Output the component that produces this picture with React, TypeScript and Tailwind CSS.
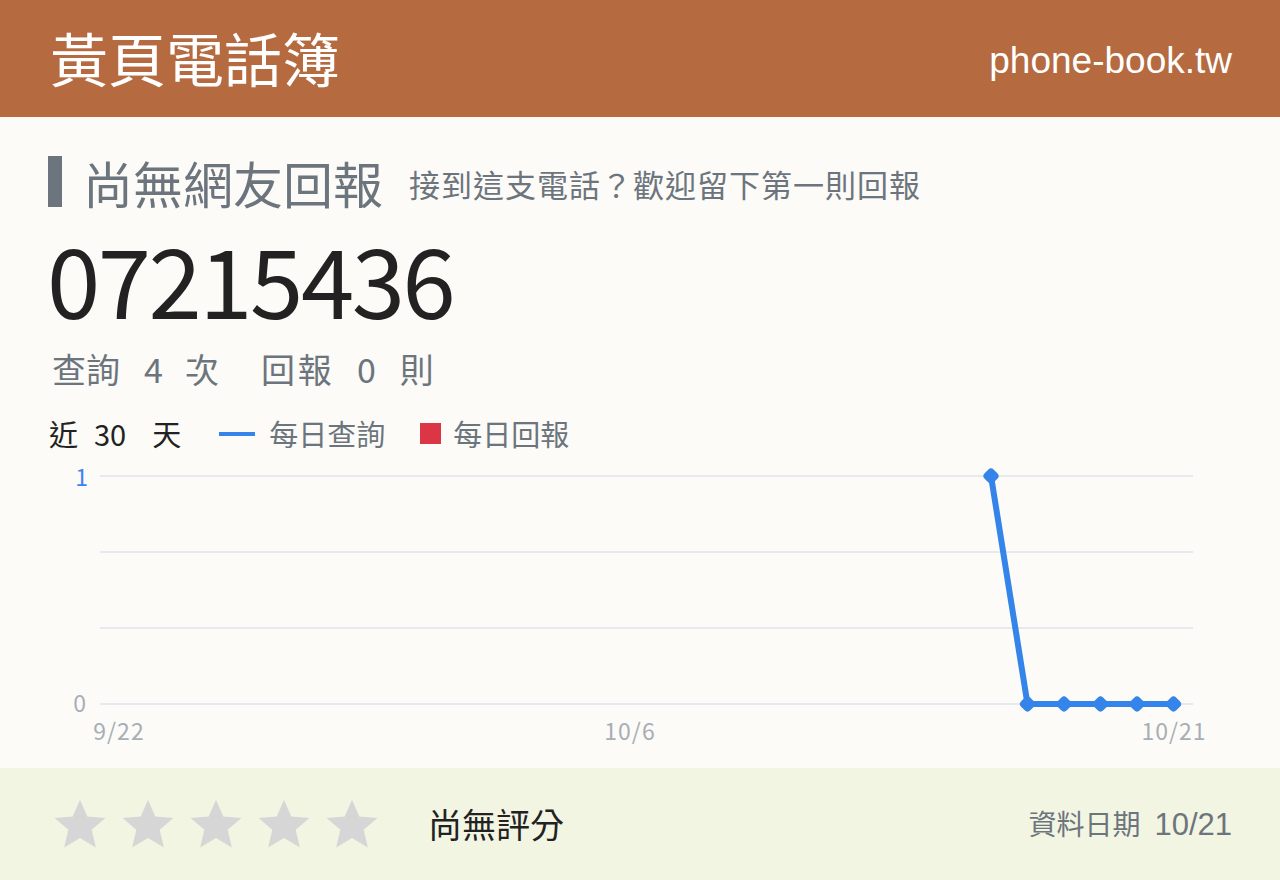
import React from "react";

const cjk = { fontFamily: '"Noto Sans CJK TC", "Noto Sans", sans-serif' };
const arial = { fontFamily: '"Liberation Sans", Arial, sans-serif' };

function Star() {
  return (
    <svg width="56" height="56" viewBox="0 0 24 24">
      <path d="M12 1.6l3.1 7.2 7.8.6-5.9 5.1 1.8 7.6L12 18l-6.8 4.1 1.8-7.6-5.9-5.1 7.8-.6z" fill="#d6d6d6" />
    </svg>
  );
}

function Chart() {
  const x0 = 115;
  const step = 36.5;
  const top = 476;
  const bottom = 704;
  const pts = [25, 26, 27, 28, 29].map((i) => [x0 + i * step, bottom]);
  const all = [[x0 + 24 * step, top], ...pts];
  const d = all.map((p, i) => `${i === 0 ? "M" : "L"}${p[0]} ${p[1]}`).join(" ");
  const lbl = { ...cjk, letterSpacing: "1px" };
  return (
    <svg width="1280" height="300" viewBox="0 460 1280 300" className="block">
      {[476, 552, 628, 704].map((y) => (
        <line key={y} x1="100" x2="1193" y1={y} y2={y} stroke="#e8e9ee" strokeWidth="2" />
      ))}
      <text x="88" y="486" textAnchor="end" fill="#3b82f6" fontSize="23" style={cjk}>1</text>
      <text x="86" y="712" textAnchor="end" fill="#a7aeb6" fontSize="23" style={cjk}>0</text>
      <text x="119" y="740" textAnchor="middle" fill="#a7aeb6" fontSize="23" style={lbl}>9/22</text>
      <text x="630" y="740" textAnchor="middle" fill="#a7aeb6" fontSize="23" style={lbl}>10/6</text>
      <text x="1174" y="740" textAnchor="middle" fill="#a7aeb6" fontSize="23" style={lbl}>10/21</text>
      <path d={d} fill="none" stroke="#3584ea" strokeWidth="6" strokeLinejoin="round" />
      {all.map((p, i) => (
        <rect key={i} x={p[0] - 6.5} y={p[1] - 6.5} width="13" height="13" rx="4" fill="#3584ea" transform={`rotate(45 ${p[0]} ${p[1]})`} />
      ))}
    </svg>
  );
}

export default function App() {
  return (
    <div className="w-[1280px] h-[880px] bg-[#fcfbf7] flex flex-col overflow-hidden" style={cjk}>
      <header className="h-[117px] bg-[#b56a40] flex items-center justify-between pl-[50px] pr-[48px] shrink-0">
        <div className="text-white text-[58px] leading-none pb-[4px]" style={cjk}>黃頁電話簿</div>
        <div className="text-white text-[37px] leading-none pt-[4px]" style={arial}>phone-book.tw</div>
      </header>
      <main className="flex-1 flex flex-col">
        <div className="flex items-center pl-[48px] pt-[39px]">
          <div className="w-[14px] h-[51px] bg-[#6c757d]" />
          <div className="ml-[21px] text-[50px] leading-none text-[#6c757d]">尚無網友回報</div>
          <div className="ml-[26px] text-[31px] tracking-[1px] leading-none text-[#6c757d] pt-[4px]">接到這支電話？歡迎留下第一則回報</div>
        </div>
        <div className="pl-[47px] mt-[23px] text-[96px] tracking-[-2.5px] leading-none text-[#222222]">07215436</div>
        <div className="pl-[52px] mt-[26px] text-[34px] leading-none text-[#6c757d] flex items-center">
          <span>查詢</span>
          <span className="ml-[24px]">4</span>
          <span className="ml-[22px]">次</span>
          <span className="ml-[42px] tracking-[3px]">回報</span>
          <span className="ml-[22px]">0</span>
          <span className="ml-[24px]">則</span>
        </div>
        <div className="pl-[49px] mt-[33px] flex items-center text-[29px] leading-none">
          <span className="text-[#222222]">近</span>
          <span className="ml-[16px] text-[#222222]">30</span>
          <span className="ml-[26px] text-[#222222]">天</span>
          <span className="ml-[38px] w-[36px] h-[4px] bg-[#3584ea]" />
          <span className="ml-[14px] text-[#6c757d]">每日查詢</span>
          <span className="ml-[35px] w-[21px] h-[21px] bg-[#dc3545]" />
          <span className="ml-[12px] text-[#6c757d]">每日回報</span>
        </div>
        <div className="mt-[12px]">
          <Chart />
        </div>
      </main>
      <footer className="h-[112px] bg-[#f2f5e2] flex items-center pl-[52px] pr-[48px] shrink-0">
        <div className="flex gap-[12px]">
          <Star /><Star /><Star /><Star /><Star />
        </div>
        <div className="ml-[48px] text-[34px] leading-none text-[#222222]">尚無評分</div>
        <div className="ml-auto flex items-baseline text-[#6c757d]">
          <span className="text-[28px] leading-none">資料日期</span>
          <span className="ml-[14px] text-[31px] leading-none" style={arial}>10/21</span>
        </div>
      </footer>
    </div>
  );
}
